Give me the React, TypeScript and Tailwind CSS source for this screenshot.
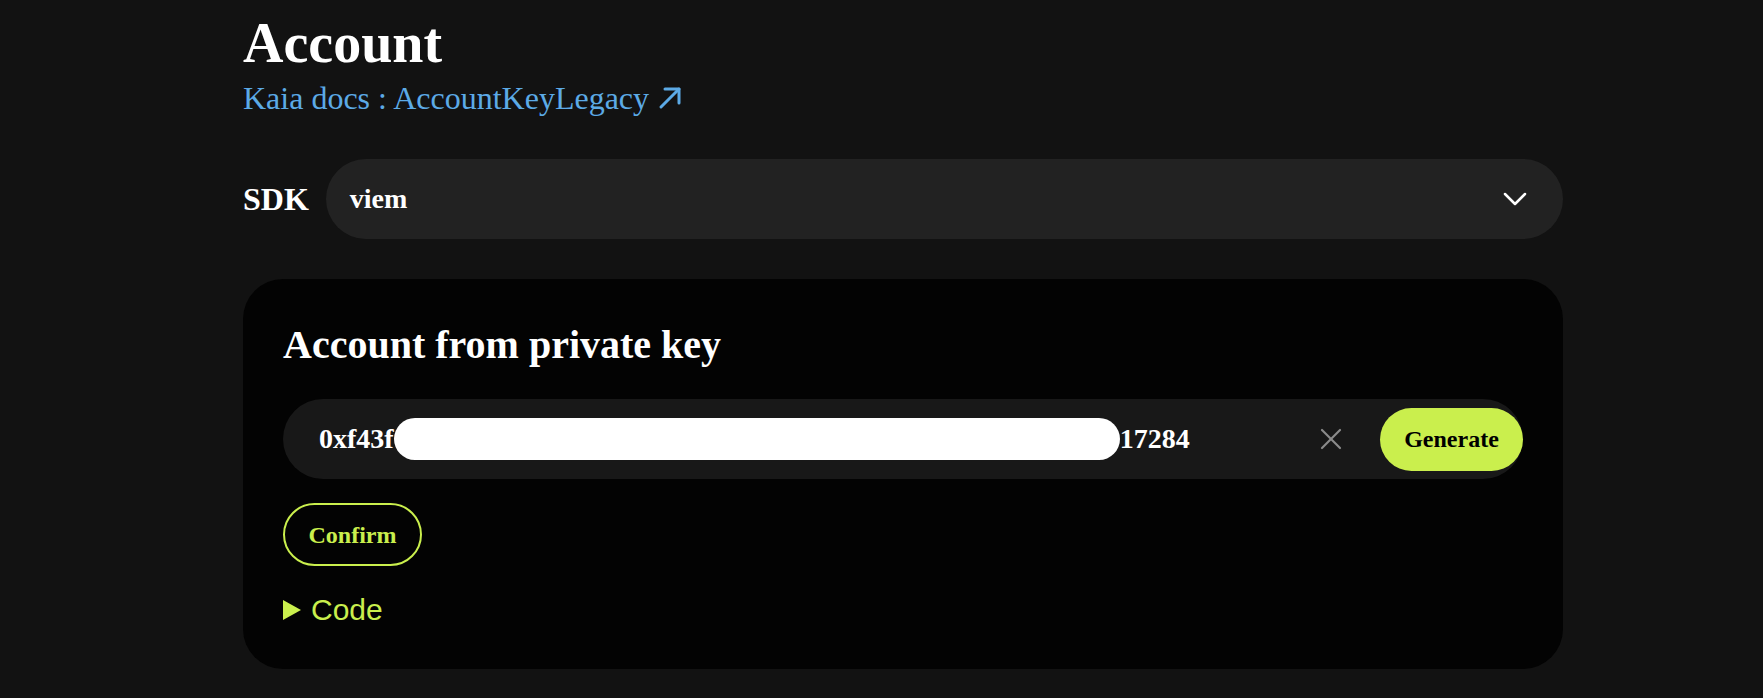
import { useState } from 'react';

const serif = { fontFamily: '"Liberation Serif", "Times New Roman", serif' };

function ArrowOutward() {
  return (
    <svg width="24" height="24" viewBox="0 0 24 24" fill="none" stroke="currentColor" strokeWidth="3" strokeLinecap="round" strokeLinejoin="round">
      <path d="M3 21 21 3" />
      <path d="M7 3h14v14" />
    </svg>
  );
}

function Chevron() {
  return (
    <svg width="24" height="14" viewBox="0 0 24 14" fill="none" stroke="white" strokeWidth="2.5" strokeLinecap="round" strokeLinejoin="round">
      <path d="M2 2 12 12 22 2" />
    </svg>
  );
}

function ClearIcon() {
  return (
    <svg width="22" height="22" viewBox="0 0 22 22" fill="none" stroke="#8b8b8b" strokeWidth="2.2" strokeLinecap="round">
      <path d="M2 2 20 20" />
      <path d="M20 2 2 20" />
    </svg>
  );
}

export default function App() {
  const [sdk] = useState('viem');
  const [open, setOpen] = useState(false);

  return (
    <div className="min-h-screen bg-[#121212] text-white pl-[243px] pt-[11px]" style={serif}>
      <div className="w-[1320px]">
        <h1 className="text-[56px] leading-[64px] font-bold">Account</h1>
        <a className="mt-[3px] flex items-center gap-[9px] text-[32px] leading-[40px] text-[#5caae6] w-fit">
          Kaia docs : AccountKeyLegacy
          <ArrowOutward />
        </a>

        <div className="mt-[41px] flex items-center gap-[17px]">
          <span className="text-[32px] font-bold">SDK</span>
          <div className="flex-1 h-[80px] rounded-full bg-[#222222] flex items-center justify-between pl-[24px] pr-[36px]">
            <span className="text-[28px] font-bold">{sdk}</span>
            <Chevron />
          </div>
        </div>

        <div className="mt-[40px] rounded-[40px] bg-[#030303] px-[40px] pt-[42px] pb-[37px]">
          <h2 className="text-[40px] leading-[48px] font-bold">Account from private key</h2>

          <div className="mt-[30px] h-[80px] rounded-full bg-[#181818] flex items-center pl-[36px]">
            <div className="flex items-center text-[28px] font-bold">
              <span>0xf43f</span>
              <span className="w-[726px] h-[42px] rounded-full bg-white"></span>
              <span>17284</span>
            </div>
            <div className="flex-1"></div>
            <button className="mr-[38px]">
              <ClearIcon />
            </button>
            <button className="h-[63px] w-[143px] rounded-full bg-[#caef4d] text-black text-[24px] font-bold">
              Generate
            </button>
          </div>

          <button className="mt-[24px] h-[63px] w-[139px] rounded-full border-2 border-[#caef4d] text-[#caef4d] text-[24px] font-bold">
            Confirm
          </button>

          <div
            className="mt-[21px] flex items-center gap-[10px] text-[30px] text-[#caef4d] cursor-pointer"
            style={{ fontFamily: '"Liberation Sans", Arial, sans-serif' }}
            onClick={() => setOpen(!open)}
          >
            <svg width="18" height="20" viewBox="0 0 18 20" fill="#caef4d">
              <path d="M0 0 18 10 0 20Z" />
            </svg>
            <span>Code</span>
          </div>
        </div>
      </div>
    </div>
  );
}
